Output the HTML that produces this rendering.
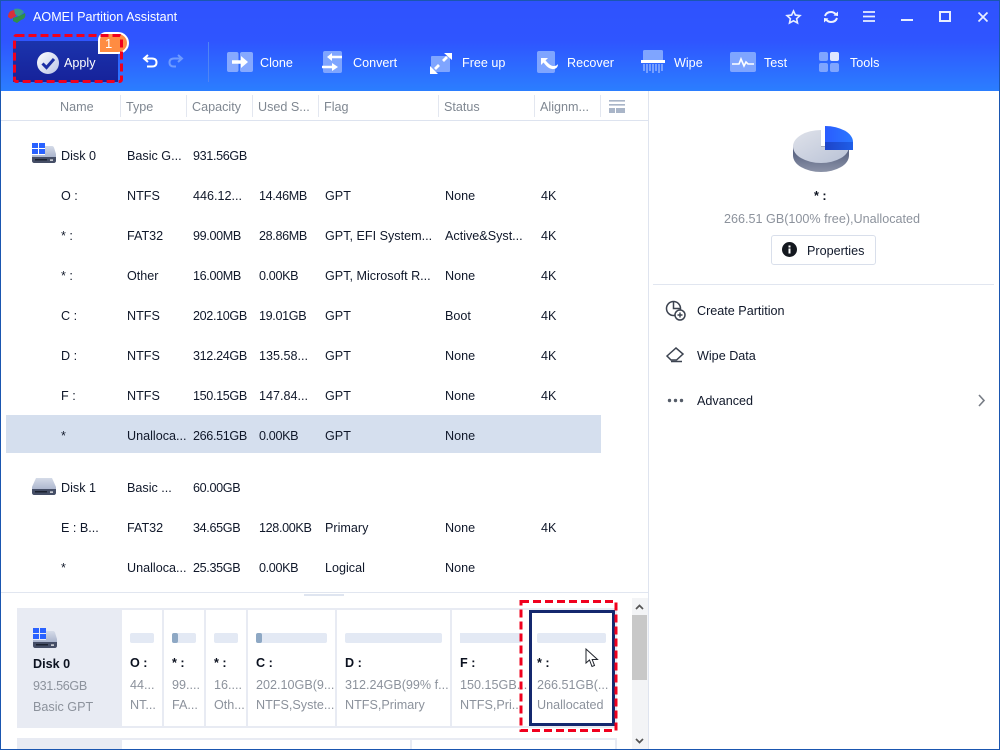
<!DOCTYPE html>
<html><head><meta charset="utf-8"><style>
html,body{margin:0;padding:0;width:1000px;height:750px;overflow:hidden;background:#fff}
body{position:relative;font-family:"Liberation Sans",sans-serif;font-size:12.6px;color:#10182a}
.t{position:absolute;line-height:16px;height:16px;white-space:nowrap;margin-top:1px}
.w{color:#fff;font-size:12.6px;margin-top:0}
.h{color:#7f8791;font-size:12.6px}
.g{color:#8c929c;font-size:12.6px}
.b{font-weight:bold;color:#0c1220}
.n{letter-spacing:-.35px}
.a{position:absolute}
svg{position:absolute;overflow:visible}
</style></head><body>
<div class="a" style="left:0;top:0;width:1000px;height:91px;background:linear-gradient(#2f52fe 0,#2f55ff 45%,#2b7eff 100%)"></div>
<div class="a" style="left:0;top:0;width:1000px;height:1px;background:#1a56b0"></div>

<svg style="left:7px;top:8px" width="20" height="16" viewBox="0 0 20 16"><path d="M1 9C1 4 4 2 8 2L9 8 4 11Z" fill="#d8303a"/><path d="M7 1C11 0 15 1 17 4L12 9 8 6Z" fill="#3a9a8a"/><path d="M6 10L12 8 18 5C19 8 18 11 14 12L10 15 6 13Z" fill="#2f8f4a"/></svg>
<div class="t w" style="left:33px;top:9px">AOMEI Partition Assistant</div>

<div class="a" style="left:13px;top:41px;width:105px;height:41px;background:linear-gradient(#1b34ad,#16229a)"></div>
<svg style="left:37px;top:52px" width="22" height="22" viewBox="0 0 22 22"><defs><linearGradient id="c" x1="0" y1="0" x2="1" y2="1"><stop offset="0" stop-color="#fff"/><stop offset="1" stop-color="#b9c3e6"/></linearGradient></defs><circle cx="11" cy="11" r="11" fill="url(#c)"/><path d="M5.5 11.5L9.5 15.5 17 7" fill="none" stroke="#1c2fa5" stroke-width="3"/></svg>
<div class="t w" style="left:64px;top:55px">Apply</div>
<div class="a" style="left:98px;top:32px;width:31px;height:22px;background:#ff8c42;border:2px solid #fff;border-radius:8px 11px 11px 0;box-sizing:border-box"></div>
<div class="t" style="left:105px;top:35px;color:#fff;font-size:13px">1</div>
<svg style="left:0;top:0" width="130" height="90"><rect x="14.5" y="35.5" width="107" height="46" rx="2" fill="none" stroke="#f0001e" stroke-width="3" stroke-dasharray="8 4"/></svg>

<svg style="left:142px;top:54px" width="16" height="14" viewBox="0 0 16 14"><path d="M6 1L2 4.500 6 8M2 4.500H10C13 4.500 14.500 6 14.500 8.500S13 12.500 10 12.500H5" fill="none" stroke="#fff" stroke-width="2"/></svg>
<svg style="left:168px;top:54px" width="16" height="14" viewBox="0 0 16 14"><path d="M10 1L14 4.500 10 8M14 4.500H6C3 4.500 1.500 6 1.500 8.500S3 12.500 6 12.500H8" fill="none" stroke="#6f9bff" stroke-width="2"/></svg>
<div class="a" style="left:208px;top:42px;width:1px;height:40px;background:#4f84f5"></div>

<svg style="left:227px;top:52px" width="26" height="20" viewBox="0 0 26 20"><rect width="11.500" height="20" rx="2" fill="#86a9ff"/><rect x="13" width="13" height="20" rx="2" fill="#86a9ff"/><path d="M5 10H15" stroke="#fff" stroke-width="3.500" fill="none"/><path d="M14 4L21 10 14 16Z" fill="#fff"/></svg>
<div class="t w" style="left:260px;top:55px">Clone</div>
<svg style="left:322px;top:51px" width="21" height="22" viewBox="0 0 21 22"><rect x="1" width="19" height="22" rx="2" fill="#7fa5ff"/><path d="M9 6H20M0 16H11" stroke="#fff" stroke-width="2.500" fill="none"/><path d="M10 2L5 6 10 10ZM10 12L16 16 10 20Z" fill="#fff"/></svg>
<div class="t w" style="left:353px;top:55px">Convert</div>
<svg style="left:430px;top:52px" width="22" height="22" viewBox="0 0 22 22"><rect x="1" y="4" width="19" height="16" rx="1" fill="#7fa5ff"/><path d="M13 9L17 5M9 13L5 17" stroke="#fff" stroke-width="2.800" fill="none"/><path d="M14 1H22V8ZM0 14V22H8Z" fill="#fff"/></svg>
<div class="t w" style="left:462px;top:55px">Free up</div>
<svg style="left:537px;top:51px" width="22" height="22" viewBox="0 0 22 22"><rect width="18" height="22" rx="2" fill="#7fa5ff"/><path d="M4 14V7H11L8.500 9.500C11 12 13 14.500 16 15 18 15.300 20 14.500 21 13 21 17 18 18.500 15 18 11 17.500 8.500 14 6.500 11.500Z" fill="#fff"/></svg>
<div class="t w" style="left:567px;top:55px">Recover</div>
<svg style="left:641px;top:50px" width="24" height="24" viewBox="0 0 24 24"><rect x="2" width="20" height="11" rx="1.500" fill="#7fa5ff"/><rect y="10" width="24" height="3" fill="#fff"/><path d="M3 14V21M6 14V23M9 14V21M12 14V23M15 14V21M18 14V23M21 14V21" stroke="#8fb0ff" stroke-width="1.500"/></svg>
<div class="t w" style="left:674px;top:55px">Wipe</div>
<svg style="left:730px;top:52px" width="26" height="20" viewBox="0 0 26 20"><rect width="26" height="20" rx="2" fill="#7fa5ff"/><path d="M2 12H9L11 7 14 14 16 10 18 12H24" fill="none" stroke="#fff" stroke-width="1.600"/></svg>
<div class="t w" style="left:764px;top:55px">Test</div>
<svg style="left:819px;top:52px" width="20" height="20" viewBox="0 0 20 20"><rect width="9" height="9" rx="2" fill="#7fa5ff"/><rect x="11" width="9" height="9" rx="2" fill="#dfe7ff"/><rect y="11" width="9" height="9" rx="2" fill="#7fa5ff"/><rect x="11" y="11" width="9" height="9" rx="2" fill="#7fa5ff"/></svg>
<div class="t w" style="left:850px;top:55px">Tools</div>

<svg style="left:786px;top:10px" width="15" height="14" viewBox="0 0 15 14"><path d="M7.500 1L9.400 5.100 14 5.600 10.600 8.700 11.500 13 7.500 10.800 3.500 13 4.400 8.700 1 5.600 5.600 5.100Z" fill="none" stroke="#e8eeff" stroke-width="1.600"/></svg>
<svg style="left:823px;top:10px" width="16" height="14" viewBox="0 0 16 14"><path d="M2 6C3 3 5 2 8 2 10 2 11.500 3 12.500 4M14 8C13 11 11 12 8 12 6 12 4.500 11 3.500 10" fill="none" stroke="#eef2ff" stroke-width="2"/><path d="M10.500 5.500L15 6V1.500ZM5.500 8.500L1 8V12.500Z" fill="#eef2ff"/></svg>
<svg style="left:863px;top:11px" width="12" height="11" viewBox="0 0 12 11"><path d="M0 1H12M0 5.500H12M0 10H12" stroke="#e8eeff" stroke-width="1.700"/></svg>
<div class="a" style="left:901px;top:19px;width:12px;height:2px;background:#e8eeff"></div>
<div class="a" style="left:939px;top:11px;width:8px;height:7px;border:2px solid #e8eeff"></div>
<svg style="left:978px;top:12px" width="10" height="10" viewBox="0 0 10 10"><path d="M0.500 0.500L9.500 9.500M9.500 0.500L0.500 9.500" stroke="#e8eeff" stroke-width="1.700"/></svg>

<!-- header -->
<div class="a" style="left:1px;top:120px;width:647px;height:1px;background:#dde3ef"></div>
<div class="a" style="left:648px;top:91px;width:1px;height:659px;background:#dfe4ef"></div>
<div class="a" style="left:120px;top:95px;width:1px;height:22px;background:#e3e7f0"></div>
<div class="a" style="left:186px;top:95px;width:1px;height:22px;background:#e3e7f0"></div>
<div class="a" style="left:252px;top:95px;width:1px;height:22px;background:#e3e7f0"></div>
<div class="a" style="left:318px;top:95px;width:1px;height:22px;background:#e3e7f0"></div>
<div class="a" style="left:438px;top:95px;width:1px;height:22px;background:#e3e7f0"></div>
<div class="a" style="left:534px;top:95px;width:1px;height:22px;background:#e3e7f0"></div>
<div class="a" style="left:600px;top:95px;width:1px;height:22px;background:#e3e7f0"></div>
<div class="t h" style="left:60px;top:98px">Name</div>
<div class="t h" style="left:126px;top:98px">Type</div>
<div class="t h" style="left:192px;top:98px">Capacity</div>
<div class="t h" style="left:258px;top:98px">Used S...</div>
<div class="t h" style="left:324px;top:98px">Flag</div>
<div class="t h" style="left:444px;top:98px">Status</div>
<div class="t h" style="left:540px;top:98px">Alignm...</div>
<svg style="left:609px;top:100px" width="16" height="13" viewBox="0 0 16 13"><path d="M0 0H16V1.600H0ZM0 4H16V5.600H0Z" fill="#a9b5c8"/><path d="M0 8H6V13H0ZM7 8H16V13H7Z" fill="#a9b5c8"/></svg>

<!-- rows -->
<div class="a" style="left:6px;top:415px;width:595px;height:38px;background:#d5dfee"></div>

<svg style="left:32px;top:143px" width="24" height="20" viewBox="0 0 24 20"><defs><linearGradient id="d" x1="0" y1="0" x2="0" y2="1"><stop offset="0" stop-color="#d5dbe8"/><stop offset="1" stop-color="#aab4cc"/></linearGradient></defs><path d="M0 12H13V3H20C21 3 21.500 3.500 22 4.500L24 11V14H0Z" fill="url(#d)"/><path d="M0 14H24V18C24 19 23 20 22 20H2C1 20 0 19 0 18Z" fill="#454e66"/><rect x="3" y="16" width="12" height="1.500" fill="#1c2230"/><rect x="18" y="16.500" width="3" height="1.200" fill="#fff"/><path d="M0 0H6V5H0ZM7 0H13V5H7ZM0 6H6V11H0ZM7 6H13V11H7Z" fill="#2a62ff"/></svg>
<div class="t" style="left:61px;top:147px">Disk 0</div><div class="t" style="left:127px;top:147px">Basic G...</div><div class="t n" style="left:193px;top:147px">931.56GB</div>

<div class="t" style="left:61px;top:187px">O :</div><div class="t" style="left:127px;top:187px">NTFS</div><div class="t" style="left:193px;top:187px">446.12...</div><div class="t n" style="left:259px;top:187px">14.46MB</div><div class="t" style="left:325px;top:187px">GPT</div><div class="t" style="left:445px;top:187px">None</div><div class="t" style="left:541px;top:187px">4K</div>

<div class="t" style="left:61px;top:227px">* :</div><div class="t" style="left:127px;top:227px">FAT32</div><div class="t n" style="left:193px;top:227px">99.00MB</div><div class="t n" style="left:259px;top:227px">28.86MB</div><div class="t" style="left:325px;top:227px">GPT, EFI System...</div><div class="t" style="left:445px;top:227px">Active&amp;Syst...</div><div class="t" style="left:541px;top:227px">4K</div>

<div class="t" style="left:61px;top:267px">* :</div><div class="t" style="left:127px;top:267px">Other</div><div class="t n" style="left:193px;top:267px">16.00MB</div><div class="t n" style="left:259px;top:267px">0.00KB</div><div class="t" style="left:325px;top:267px">GPT, Microsoft R...</div><div class="t" style="left:445px;top:267px">None</div><div class="t" style="left:541px;top:267px">4K</div>

<div class="t" style="left:61px;top:307px">C :</div><div class="t" style="left:127px;top:307px">NTFS</div><div class="t n" style="left:193px;top:307px">202.10GB</div><div class="t n" style="left:259px;top:307px">19.01GB</div><div class="t" style="left:325px;top:307px">GPT</div><div class="t" style="left:445px;top:307px">Boot</div><div class="t" style="left:541px;top:307px">4K</div>

<div class="t" style="left:61px;top:347px">D :</div><div class="t" style="left:127px;top:347px">NTFS</div><div class="t n" style="left:193px;top:347px">312.24GB</div><div class="t" style="left:259px;top:347px">135.58...</div><div class="t" style="left:325px;top:347px">GPT</div><div class="t" style="left:445px;top:347px">None</div><div class="t" style="left:541px;top:347px">4K</div>

<div class="t" style="left:61px;top:387px">F :</div><div class="t" style="left:127px;top:387px">NTFS</div><div class="t n" style="left:193px;top:387px">150.15GB</div><div class="t" style="left:259px;top:387px">147.84...</div><div class="t" style="left:325px;top:387px">GPT</div><div class="t" style="left:445px;top:387px">None</div><div class="t" style="left:541px;top:387px">4K</div>

<div class="t" style="left:61px;top:427px">*</div><div class="t" style="left:127px;top:427px">Unalloca...</div><div class="t n" style="left:193px;top:427px">266.51GB</div><div class="t n" style="left:259px;top:427px">0.00KB</div><div class="t" style="left:325px;top:427px">GPT</div><div class="t" style="left:445px;top:427px">None</div>

<svg style="left:32px;top:478px" width="24" height="17" viewBox="0 0 24 17"><path d="M4 0H20L24 9V12H0V9Z" fill="url(#d)"/><path d="M0 11H24V15C24 16 23 17 22 17H2C1 17 0 16 0 15Z" fill="#454e66"/><rect x="3" y="13" width="12" height="1.500" fill="#1c2230"/><rect x="18" y="13.500" width="3" height="1.200" fill="#fff"/></svg>
<div class="t" style="left:61px;top:479px">Disk 1</div><div class="t" style="left:127px;top:479px">Basic ...</div><div class="t n" style="left:193px;top:479px">60.00GB</div>

<div class="t" style="left:61px;top:519px">E : B...</div><div class="t" style="left:127px;top:519px">FAT32</div><div class="t n" style="left:193px;top:519px">34.65GB</div><div class="t n" style="left:259px;top:519px">128.00KB</div><div class="t" style="left:325px;top:519px">Primary</div><div class="t" style="left:445px;top:519px">None</div><div class="t" style="left:541px;top:519px">4K</div>

<div class="t" style="left:61px;top:559px">*</div><div class="t" style="left:127px;top:559px">Unalloca...</div><div class="t n" style="left:193px;top:559px">25.35GB</div><div class="t n" style="left:259px;top:559px">0.00KB</div><div class="t" style="left:325px;top:559px">Logical</div><div class="t" style="left:445px;top:559px">None</div>

<!-- right panel -->
<svg style="left:792px;top:125px" width="62" height="48" viewBox="0 0 62 48"><defs><linearGradient id="p1" x1="0" y1="0" x2="1" y2="1"><stop offset="0" stop-color="#dfe2ea"/><stop offset="1" stop-color="#b9c2d6"/></linearGradient><linearGradient id="p2" x1="0" y1="0" x2="0" y2="1"><stop offset="0" stop-color="#4d5878"/><stop offset="1" stop-color="#8c93a8"/></linearGradient><linearGradient id="p3" x1="0" y1="0" x2="1" y2="0"><stop offset="0" stop-color="#2a5cff"/><stop offset="1" stop-color="#2a78ff"/></linearGradient><linearGradient id="p4" x1="0" y1="0" x2="1" y2="0"><stop offset="0" stop-color="#1d44c8"/><stop offset="1" stop-color="#1f5ee8"/></linearGradient></defs><path d="M1 21.500V30.500A28 16.500 0 0 0 57 30.500V21.500Z" fill="url(#p2)"/><path d="M29 5A28 16.500 0 1 0 57 21.500V22H29Z" fill="url(#p1)"/><path d="M33 1A28 16 0 0 1 61 17H33Z" fill="url(#p3)"/><path d="M33 17H61V25H33Z" fill="url(#p4)"/></svg>
<div class="t b" style="left:814px;top:187px">* :</div>
<div class="t g" style="left:724px;top:210px">266.51 GB(100% free),Unallocated</div>
<div class="a" style="left:771px;top:235px;width:105px;height:30px;border:1px solid #d9dfeb;border-radius:3px;box-sizing:border-box"></div>
<svg style="left:782px;top:242px" width="15" height="15" viewBox="0 0 15 15"><circle cx="7.500" cy="7.500" r="7.500" fill="#14181f"/><rect x="6.500" y="6.500" width="2" height="5" fill="#fff"/><rect x="6.500" y="3.500" width="2" height="2" fill="#fff"/></svg>
<div class="t" style="left:807px;top:242px">Properties</div>
<div class="a" style="left:653px;top:284px;width:341px;height:1px;background:#e1e6f0"></div>

<svg style="left:666px;top:301px" width="20" height="20" viewBox="0 0 20 20"><circle cx="7.500" cy="7.500" r="7" fill="none" stroke="#3c4350" stroke-width="1.500"/><path d="M7.500 .5V7.500H14.500" fill="none" stroke="#3c4350" stroke-width="1.500"/><circle cx="14" cy="14" r="5" fill="#fff" stroke="#3c4350" stroke-width="1.500"/><path d="M11.500 14H16.500M14 11.500V16.500" stroke="#3c4350" stroke-width="1.400"/></svg>
<div class="t" style="left:697px;top:302px">Create Partition</div>
<svg style="left:666px;top:347px" width="18" height="16" viewBox="0 0 18 16"><path d="M1 9L10 1 17 7 10.500 13H5Z" fill="none" stroke="#3c4350" stroke-width="1.500"/><path d="M5 14.500H16" stroke="#3c4350" stroke-width="1.500"/></svg>
<div class="t" style="left:697px;top:347px">Wipe Data</div>
<svg style="left:667px;top:398px" width="17" height="5" viewBox="0 0 17 5"><circle cx="2.500" cy="2.500" r="1.700" fill="#555c68"/><circle cx="8.500" cy="2.500" r="1.700" fill="#555c68"/><circle cx="14.500" cy="2.500" r="1.700" fill="#555c68"/></svg>
<div class="t" style="left:697px;top:392px">Advanced</div>
<svg style="left:977px;top:394px" width="9" height="13" viewBox="0 0 9 13"><path d="M2 1L7 6.500 2 12" fill="none" stroke="#777c85" stroke-width="1.600"/></svg>

<!-- lower panel -->
<div class="a" style="left:1px;top:592px;width:647px;height:1px;background:#e1e6f0"></div>
<div class="a" style="left:304px;top:594px;width:40px;height:2px;background:#dfe5f0"></div>

<div class="a" style="left:17px;top:608px;width:600px;height:120px;background:#e8ebf3"></div>
<div class="a" style="left:122px;top:610px;width:40px;height:116px;background:#fff"></div>
<div class="a" style="left:164px;top:610px;width:40px;height:116px;background:#fff"></div>
<div class="a" style="left:206px;top:610px;width:40px;height:116px;background:#fff"></div>
<div class="a" style="left:248px;top:610px;width:87px;height:116px;background:#fff"></div>
<div class="a" style="left:337px;top:610px;width:113px;height:116px;background:#fff"></div>
<div class="a" style="left:452px;top:610px;width:77px;height:116px;background:#fff"></div>

<div class="a" style="left:17px;top:738px;width:600px;height:12px;background:#e8ebf3"></div>
<div class="a" style="left:122px;top:740px;width:288px;height:10px;background:#fff"></div>
<div class="a" style="left:412px;top:740px;width:203px;height:10px;background:#fff"></div>

<svg style="left:33px;top:628px" width="24" height="20" viewBox="0 0 24 20"><path d="M0 12H13V3H20C21 3 21.500 3.500 22 4.500L24 11V14H0Z" fill="url(#d)"/><path d="M0 14H24V18C24 19 23 20 22 20H2C1 20 0 19 0 18Z" fill="#454e66"/><rect x="3" y="16" width="12" height="1.500" fill="#1c2230"/><rect x="18" y="16.500" width="3" height="1.200" fill="#fff"/><path d="M0 0H6V5H0ZM7 0H13V5H7ZM0 6H6V11H0ZM7 6H13V11H7Z" fill="#2a62ff"/></svg>
<div class="t b" style="left:33px;top:655px">Disk 0</div>
<div class="t g n" style="left:33px;top:677px">931.56GB</div>
<div class="t g" style="left:33px;top:698px">Basic GPT</div>

<div class="a" style="left:130px;top:633px;width:24px;height:10px;background:#e3e9f4;border-radius:2px"></div>
<div class="a" style="left:172px;top:633px;width:24px;height:10px;background:#e3e9f4;border-radius:2px"></div>
<div class="a" style="left:172px;top:633px;width:6px;height:10px;background:#8ea8c4;border-radius:2px"></div>
<div class="a" style="left:214px;top:633px;width:24px;height:10px;background:#e3e9f4;border-radius:2px"></div>
<div class="a" style="left:256px;top:633px;width:71px;height:10px;background:#e3e9f4;border-radius:2px"></div>
<div class="a" style="left:256px;top:633px;width:6px;height:10px;background:#8ea8c4;border-radius:2px"></div>
<div class="a" style="left:345px;top:633px;width:97px;height:10px;background:#e3e9f4;border-radius:2px"></div>
<div class="a" style="left:460px;top:633px;width:61px;height:10px;background:#e3e9f4"></div>

<div class="t b" style="left:130px;top:654px">O :</div><div class="t g" style="left:130px;top:676px">44...</div><div class="t g" style="left:130px;top:696px">NT...</div>
<div class="t b" style="left:172px;top:654px">* :</div><div class="t g" style="left:172px;top:676px">99....</div><div class="t g" style="left:172px;top:696px">FA...</div>
<div class="t b" style="left:214px;top:654px">* :</div><div class="t g" style="left:214px;top:676px">16....</div><div class="t g" style="left:214px;top:696px">Oth...</div>
<div class="t b" style="left:256px;top:654px">C :</div><div class="t g" style="left:256px;top:676px">202.10GB(9...</div><div class="t g" style="left:256px;top:696px">NTFS,Syste...</div>
<div class="t b" style="left:345px;top:654px">D :</div><div class="t g" style="left:345px;top:676px">312.24GB(99% f...</div><div class="t g" style="left:345px;top:696px">NTFS,Primary</div>
<div class="t b" style="left:460px;top:654px">F :</div><div class="t g" style="left:460px;top:676px">150.15GB...</div><div class="t g" style="left:460px;top:696px">NTFS,Pri...</div>

<div class="a" style="left:529px;top:610px;width:86px;height:116px;background:#fff;border:3px solid #14286e;box-sizing:border-box"></div>
<div class="a" style="left:537px;top:633px;width:69px;height:10px;background:#e3e9f4;border-radius:2px"></div>
<div class="t b" style="left:537px;top:654px">* :</div>
<div class="t g" style="left:537px;top:676px">266.51GB(...</div>
<div class="t g" style="left:537px;top:696px">Unallocated</div>
<svg style="left:515px;top:595px" width="110" height="145"><rect x="6" y="6.500" width="95" height="129" fill="none" stroke="#f0001e" stroke-width="3" stroke-dasharray="8 4"/></svg>
<svg style="left:585px;top:648px" width="14" height="20" viewBox="0 0 14 20"><path d="M1 1V15L4.500 12 7 18.500 9.500 17.500 7.200 11.500H12.500Z" fill="#fff" stroke="#20242c" stroke-width="1"/></svg>

<div class="a" style="left:632px;top:598px;width:16px;height:152px;background:#f3f4f6"></div>
<div class="a" style="left:632px;top:615px;width:15px;height:65px;background:#c8c8c8"></div>
<svg style="left:635px;top:604px" width="9" height="6" viewBox="0 0 9 6"><path d="M1 5L4.500 1.500 8 5" fill="none" stroke="#555" stroke-width="1.700"/></svg>
<svg style="left:635px;top:738px" width="9" height="6" viewBox="0 0 9 6"><path d="M1 1L4.500 4.500 8 1" fill="none" stroke="#555" stroke-width="1.700"/></svg>

<!-- window border -->
<div class="a" style="left:0;top:0;width:1px;height:750px;background:#1a56b0"></div>
<div class="a" style="left:999px;top:0;width:1px;height:750px;background:#1a56b0"></div>
<div class="a" style="left:0;top:749px;width:1000px;height:1px;background:#1a56b0"></div>
</body></html>
